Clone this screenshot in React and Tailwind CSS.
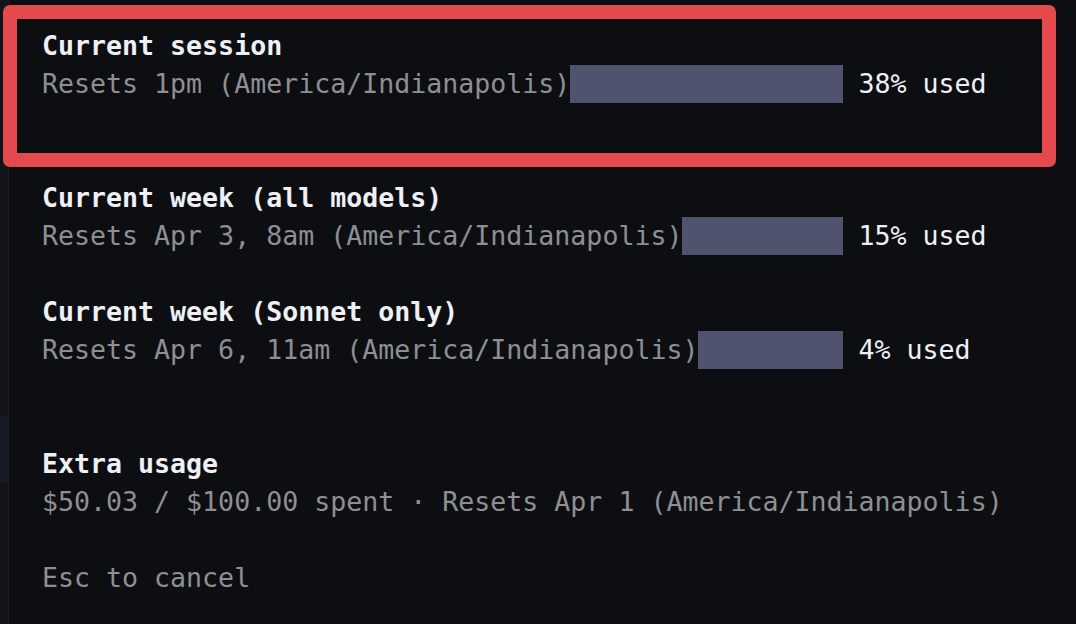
import React from "react";

const rows = [
  {
    title: "Current session",
    resets: "Resets 1pm (America/Indianapolis)",
    used: "38% used",
    gap: 2,
  },
  {
    title: "Current week (all models)",
    resets: "Resets Apr 3, 8am (America/Indianapolis)",
    used: "15% used",
    gap: 1,
  },
  {
    title: "Current week (Sonnet only)",
    resets: "Resets Apr 6, 11am (America/Indianapolis)",
    used: "4% used",
    gap: 2,
  },
];

const Blank = () => <div className="h-[38px]" />;

const App = () => {
  return (
    <div
      className="relative flex w-[1076px] h-[624px] overflow-hidden bg-[#0d0e12] text-[26.6px] leading-[38px]"
      style={{ fontFamily: '"DejaVu Sans Mono", "Liberation Mono", monospace' }}
    >
      {/* Left gutter of the terminal pane */}
      <div className="flex flex-col w-[9px] shrink-0 border-r border-[#1b1d23] bg-[#121419]">
        <div className="h-[416px]" />
        <div className="h-[67px] bg-[#161a22]" />
      </div>

      {/* Usage panel */}
      <div className="flex flex-col pt-[27px] pl-[33px]">
        {rows.map((row) => (
          <div key={row.title} className="flex flex-col">
            <div className="font-bold text-[#eef0f6]">{row.title}</div>
            <div className="flex items-stretch whitespace-pre">
              <div className="flex w-[50ch]">
                <span className="text-[#8e8f93]">{row.resets}</span>
                <div className="flex-1 bg-[#50536d]" />
              </div>
              <span className="ml-[1ch] text-[#eef0f6]">{row.used}</span>
            </div>
            {row.gap === 2 ? (
              <>
                <Blank />
                <Blank />
              </>
            ) : (
              <Blank />
            )}
          </div>
        ))}

        <div className="font-bold text-[#eef0f6]">Extra usage</div>
        <div className="whitespace-pre text-[#8e8f93]">
          $50.03 / $100.00 spent · Resets Apr 1 (America/Indianapolis)
        </div>
        <Blank />
        <div className="text-[#8e8f93]">Esc to cancel</div>
      </div>

      {/* Highlight annotation over the first row */}
      <div className="absolute left-[3px] top-[5px] w-[1053px] h-[162px] rounded-[7px] border-[14px] border-[#e4494e] pointer-events-none" />
    </div>
  );
};

export default App;
